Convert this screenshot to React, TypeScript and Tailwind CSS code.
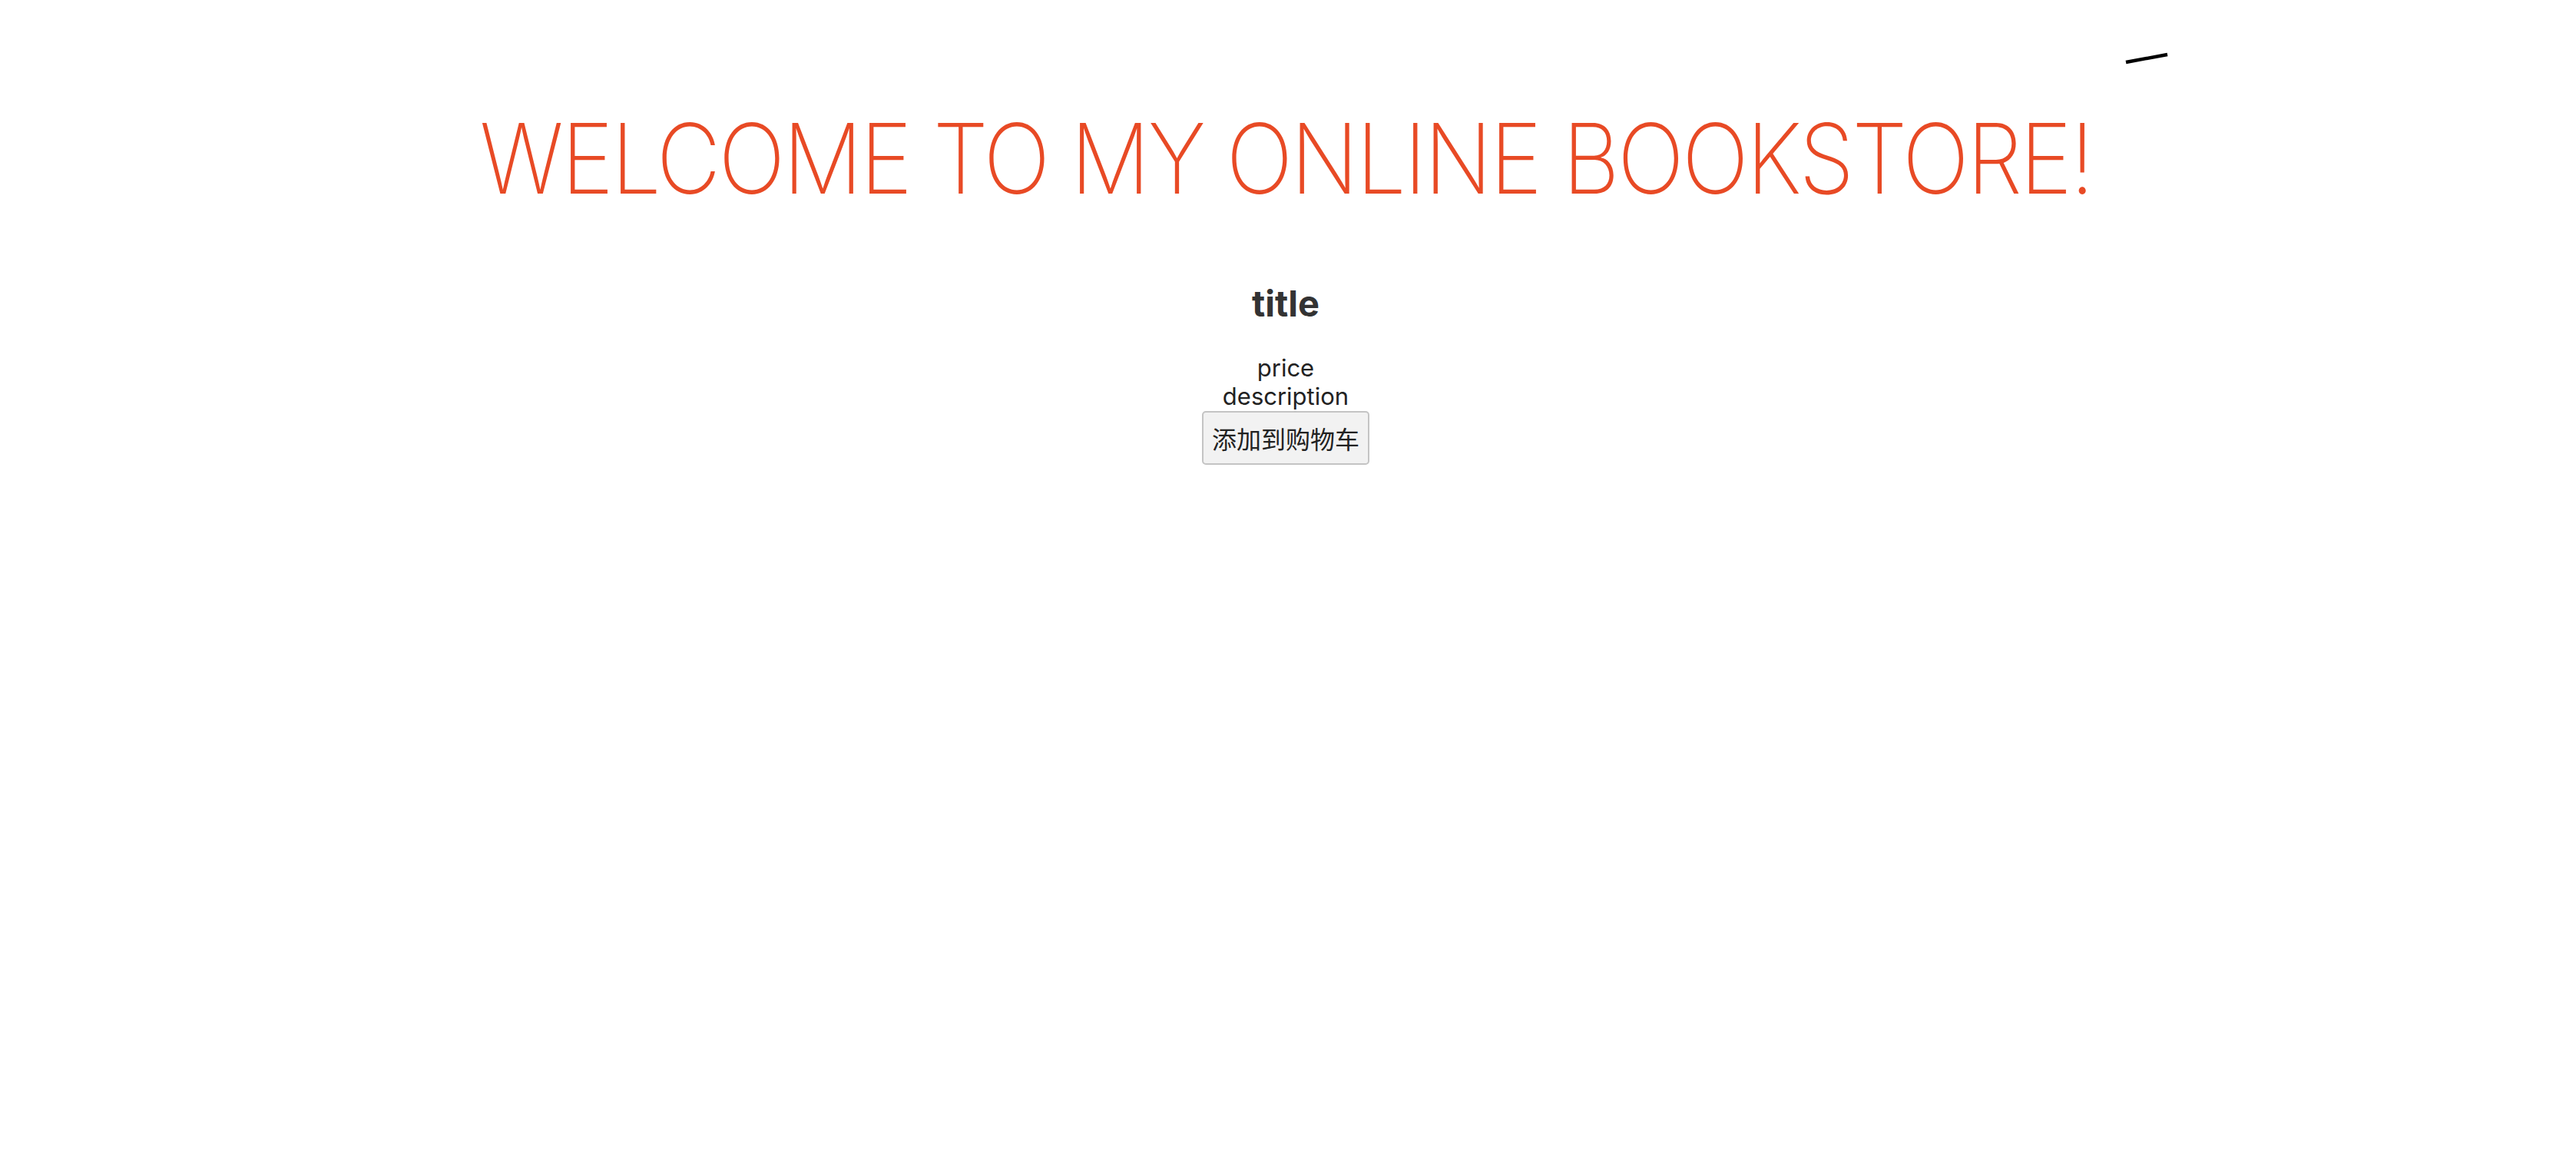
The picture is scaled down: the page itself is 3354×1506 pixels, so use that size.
export default function App() {
  return (
    <div className="relative min-h-[1506px] w-full bg-white font-['Inter',sans-serif]">
      {/* stray rotated rule in the corner */}
      <svg
        className="absolute left-[2764px] top-[66px]"
        width="62"
        height="20"
        viewBox="0 0 62 20"
        aria-hidden
      >
        <line x1="4" y1="15" x2="58" y2="5" stroke="#000" strokeWidth="4.5" />
      </svg>

      <main className="flex flex-col items-center pr-[6px]">
        <h1 className="mt-[143px] scale-x-[0.915] text-[126px] leading-none font-[170] tracking-[-0.025em] text-[#e84a25] whitespace-nowrap">
          WELCOME TO MY ONLINE BOOKSTORE!
        </h1>

        <section className="mt-[102px] flex flex-col items-center text-[#333]">
          <h2 className="text-[47px] leading-none font-bold">title</h2>
          <div className="mt-[42px] flex flex-col items-center text-[31px] leading-[37px] text-[#222]">
            <span>price</span>
            <span>description</span>
          </div>
          <button className="mt-px flex h-[70px] w-[218px] items-center justify-center rounded-[5px] border-2 border-[#c4c4c4] bg-[#f2f2f2] font-['Noto_Sans_CJK_SC',sans-serif] text-[32px] text-[#222]">
            添加到购物车
          </button>
        </section>
      </main>
    </div>
  );
}
